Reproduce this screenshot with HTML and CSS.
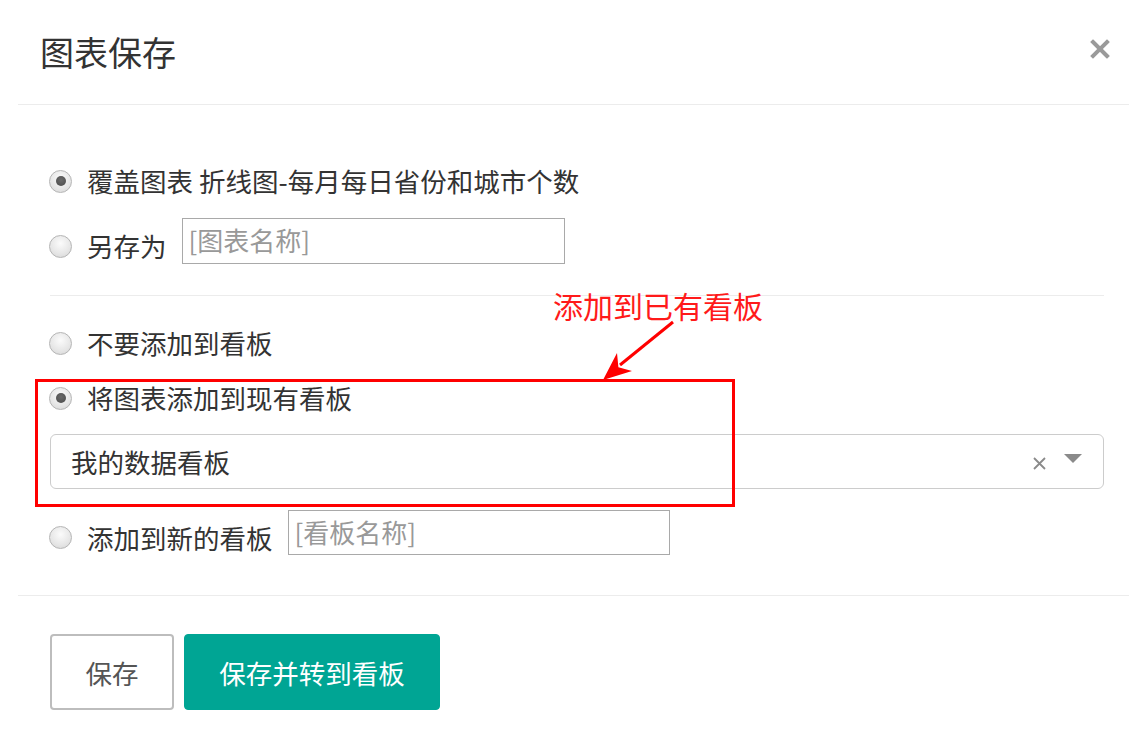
FILE: index.html
```html
<!DOCTYPE html>
<html lang="zh-CN">
<head>
<meta charset="utf-8">
<title>图表保存</title>
<link rel="stylesheet" href="styles.css">
</head>
<body>
<div class="modal">
  <div class="modal-header">
    <h4 class="modal-title">图表保存</h4>
    <svg class="close" width="20" height="20" viewBox="0 0 20 20"><path d="M3 3 L17 17 M17 3 L3 17" stroke="#9a9a9a" stroke-width="4" stroke-linecap="square"/></svg>
  </div>
  <div class="modal-body">
    <div class="row row-first">
      <span class="radio checked"></span>
      <span class="label">覆盖图表 折线图-每月每日省份和城市个数</span>
    </div>
    <div class="row row-input">
      <span class="radio shift"></span>
      <span class="label shift">另存为</span>
      <div class="text-input name-input">[图表名称]</div>
    </div>
    <div class="divider"></div>
    <div class="row">
      <span class="radio"></span>
      <span class="label">不要添加到看板</span>
    </div>
    <div class="row row-tight">
      <span class="radio checked"></span>
      <span class="label">将图表添加到现有看板</span>
    </div>
    <div class="select">
      <span class="select-value">我的数据看板</span>
      <svg class="select-clear" width="13" height="13" viewBox="0 0 13 13"><path d="M1 1 L12 12 M12 1 L1 12" stroke="#8a8a8a" stroke-width="1.8"/></svg>
      <svg class="select-arrow" width="18" height="9" viewBox="0 0 18 9"><path d="M0 0 H18 L9 9 Z" fill="#8a8a8a"/></svg>
    </div>
    <div class="row row-input row-last">
      <span class="radio shift"></span>
      <span class="label shift">添加到新的看板</span>
      <div class="text-input board-input">[看板名称]</div>
    </div>
  </div>
  <div class="modal-footer">
    <button class="btn btn-default">保存</button>
    <button class="btn btn-primary">保存并转到看板</button>
  </div>
</div>

<div class="note-text">添加到已有看板</div>
<svg class="note-arrow" width="100" height="75" viewBox="0 0 100 75">
  <path d="M83 7 L30 50" stroke="#ff0000" stroke-width="3" fill="none"/>
  <polygon points="13,65 27,38 28.4,52.2 42,56" fill="#ff0000"/>
</svg>
<div class="note-box"></div>
</body>
</html>
```
FILE: styles.css
```css
html, body {
  margin: 0;
  padding: 0;
  background: #ffffff;
}
body {
  font-family: "Noto Sans CJK SC", "Microsoft YaHei", sans-serif;
  color: #333333;
  overflow: hidden;
}
.modal {
  margin-left: 18px;
  width: 1111px;
}
.modal-header {
  height: 105px;
  box-sizing: border-box;
  display: flex;
  align-items: center;
  justify-content: space-between;
  padding: 0 19px 0 22px;
  border-bottom: 1px solid #ececec;
}
.modal-title {
  margin: 0;
  font-size: 34px;
  font-weight: normal;
  line-height: 40px;
  color: #333;
}
.close {
  margin-top: -6px;
}
.modal-body {
  padding: 53px 25px 40px 32px;
}
.row {
  display: flex;
  align-items: center;
  height: 46px;
}
.row-input {
  margin-top: 14px;
}
.row-tight {
  margin-top: 9px;
}
.row-last {
  margin-top: 21px;
  height: 45px;
}
.label {
  font-size: 26.5px;
  line-height: 32px;
  white-space: nowrap;
}
.shift {
  margin-top: 10px;
}
.radio {
  flex: none;
  width: 23px;
  height: 23px;
  box-sizing: border-box;
  border-radius: 50%;
  border: 1px solid #b5b5b5;
  background: radial-gradient(circle at 50% 35%, #fbfbfb 0%, #e6e6e6 60%, #d4d4d4 100%);
  margin-right: 15px;
  margin-left: -1px;
  display: flex;
  align-items: center;
  justify-content: center;
}
.radio.checked::after {
  content: "";
  width: 10px;
  height: 10px;
  border-radius: 50%;
  background: radial-gradient(circle at 50% 40%, #6a6a6a 0%, #4a4a4a 100%);
}
.text-input {
  box-sizing: border-box;
  height: 100%;
  border: 1px solid #a9a9a9;
  color: #999;
  font-size: 26px;
  line-height: 42px;
  padding-left: 6px;
  white-space: nowrap;
}
.name-input {
  width: 383px;
  margin-left: 15px;
}
.board-input {
  width: 382px;
  margin-left: 15px;
  line-height: 41px;
}
.divider {
  height: 1px;
  background: #ececec;
  margin: 31px 0 24px;
}
.select {
  margin-top: 13px;
  height: 55px;
  box-sizing: border-box;
  border: 1px solid #cccccc;
  border-radius: 6px;
  display: flex;
  align-items: center;
  padding: 0 21px 0 20px;
}
.select-value {
  flex: 1;
  font-size: 26.5px;
  line-height: 32px;
  color: #333;
}
.select-clear {
  margin-top: 4px;
}
.select-arrow {
  margin-left: 18px;
  margin-top: -6px;
}
.modal-footer {
  border-top: 1px solid #ececec;
  padding: 38px 32px;
  display: flex;
  gap: 10px;
}
.btn {
  height: 76px;
  box-sizing: border-box;
  font-family: "Noto Sans CJK SC", "Microsoft YaHei", sans-serif;
  font-size: 26.5px;
  border-radius: 4px;
  padding: 0;
  cursor: pointer;
}
.btn-default {
  width: 124px;
  background: #ffffff;
  border: 2px solid #bdbdbd;
  color: #555;
}
.btn-primary {
  width: 256px;
  background: #00a594;
  border: 1px solid #00a594;
  color: #ffffff;
}
.note-text {
  position: absolute;
  left: 553px;
  top: 287px;
  font-size: 30px;
  line-height: 36px;
  color: #ff1a1a;
  white-space: nowrap;
}
.note-arrow {
  position: absolute;
  left: 590px;
  top: 315px;
}
.note-box {
  position: absolute;
  left: 35px;
  top: 379px;
  width: 700px;
  height: 128px;
  box-sizing: border-box;
  border: 3px solid #ff0000;
}
```
